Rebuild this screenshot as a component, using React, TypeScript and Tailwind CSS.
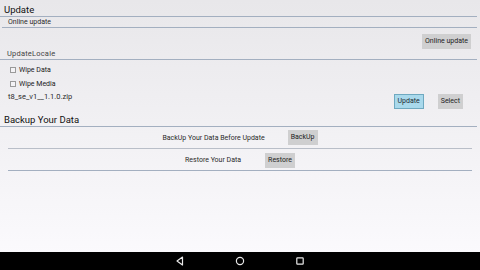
import React from 'react';

type BtnProps = {
    children: React.ReactNode;
    primary?: boolean;
};

function Btn(props: BtnProps) {
    const cls = props.primary
        ? 'bg-[#a9d9ec] border border-[#6fa9c0] text-[#1d2a33]'
        : 'bg-[#cfcfd0] text-[#222]';
    return (
        <div className={'h-[15px] px-[3px] flex items-center text-[7px] leading-none ' + cls}>
            {props.children}
        </div>
    );
}

function Check(props: { label: string }) {
    return (
        <div className="flex items-center gap-[3px] h-[14px] pl-[10px]">
            <div className="w-[6px] h-[6px] border border-[#9a9a9a] bg-[#f4f3f6]" />
            <span className="text-[7px] text-[#1a1a1a]">{props.label}</span>
        </div>
    );
}

function Title(props: { children: React.ReactNode }) {
    return (
        <div className="pl-[4px] pt-[4px] h-[17px] border-b border-[#a3afc0] text-[9.5px] leading-[12px] text-[#111]">
            {props.children}
        </div>
    );
}

export default function App() {
    return (
        <div
            className="w-[480px] h-[270px] flex flex-col overflow-hidden bg-gradient-to-b from-[#e8e7ea] to-[#fcfbfe]"
            style={{ fontFamily: 'Roboto, "Liberation Sans", sans-serif' }}
        >
            <div className="flex-1 flex flex-col pr-[3px]">
                <Title>Update</Title>
                <div className="ml-[2px] pl-[6px] h-[11px] border-b border-[#a3afc0] text-[7px] leading-[10px] text-[#2a2a2a]">
                    Online update
                </div>
                <div className="flex justify-end pr-[6px] pt-[6px] h-[22px]">
                    <Btn>Online update</Btn>
                </div>
                <div className="pl-[7px] h-[10px] border-b border-[#a3afc0] text-[7.5px] leading-[8px] text-[#444] tracking-[0.2px]">
                    UpdateLocale
                </div>
                <div className="pt-[3px]">
                    <Check label="Wipe Data" />
                    <Check label="Wipe Media" />
                </div>
                <div className="flex items-start h-[19px]">
                    <div className="pl-[8px] pt-[1px] text-[7.5px] leading-[10px] text-[#2a2a2a] flex-1">t8_se_v1__1.1.0.zip</div>
                    <div className="flex gap-[14px] pr-[14px] pt-[3px]">
                        <Btn primary>Update</Btn>
                        <Btn>Select</Btn>
                    </div>
                </div>
                <Title>Backup Your Data</Title>
                <div className="ml-[8px] mr-[5px] flex flex-col">
                    <div className="h-[22px] border-b border-[#b9bec8] flex items-center justify-center gap-[23px] pt-[1px]">
                        <span className="text-[7px] text-[#2a2a2a]">BackUp Your Data Before Update</span>
                        <div className="h-[16px] flex"><Btn>BackUp</Btn></div>
                    </div>
                    <div className="h-[22px] border-b border-[#a3afc0] flex items-center justify-center gap-[24px] pt-[1px]">
                        <span className="text-[7px] text-[#2a2a2a]">Restore Your Data</span>
                        <Btn>Restore</Btn>
                    </div>
                </div>
            </div>
            <div className="h-[18px] bg-black flex items-center justify-center gap-[48px] shrink-0">
                <svg width="12" height="12" viewBox="0 0 12 12" fill="none" stroke="#e8e8e8" strokeWidth="1.2">
                    <path d="M8.5 2 L3 6 L8.5 10 Z" strokeLinejoin="round" />
                </svg>
                <svg width="12" height="12" viewBox="0 0 12 12" fill="none" stroke="#e8e8e8" strokeWidth="1.2">
                    <circle cx="6" cy="6" r="3.6" />
                </svg>
                <svg width="12" height="12" viewBox="0 0 12 12" fill="none" stroke="#e8e8e8" strokeWidth="1.2">
                    <rect x="2.8" y="2.8" width="6.4" height="6.4" rx="0.6" />
                </svg>
            </div>
        </div>
    );
}
